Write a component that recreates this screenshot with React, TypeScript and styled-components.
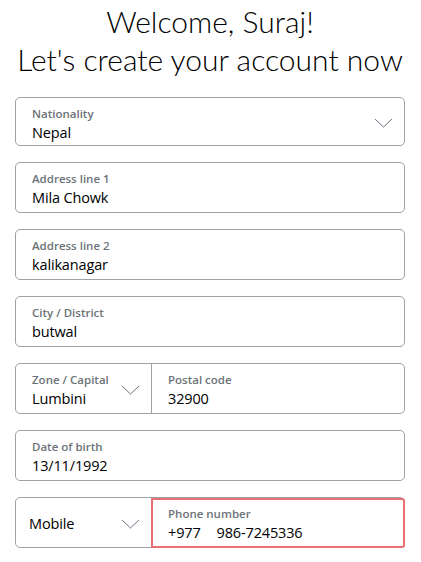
import React from "react";
import styled, { createGlobalStyle } from "styled-components";

const Global = createGlobalStyle`
  html, body { margin: 0; padding: 0; background: #fff; }
  body { font-family: "Open Sans", "Noto Sans", sans-serif; color: #000; }
`;

const Page = styled.div`
  width: 421px;
  padding: 0 16px 0 15px;
  box-sizing: border-box;
`;

const Title = styled.h1`
  margin: 2px 0 0;
  font-family: "Lato", "Open Sans", sans-serif;
  font-weight: 300;
  font-size: 30px;
  line-height: 38px;
  text-align: center;
  white-space: nowrap;
  color: #000;
`;

const Form = styled.div`
  margin-top: 19px;
  display: flex;
  flex-direction: column;
  gap: 16px;
`;

const Box = styled.div<{ $h?: number }>`
  height: ${(p) => p.$h ?? 51}px;
  box-sizing: border-box;
  border: 1px solid #9ca2a8;
  border-radius: 5px;
  display: flex;
  align-items: stretch;
`;

const Field = styled.div<{ $w?: number; $divider?: boolean; $error?: boolean }>`
  position: relative;
  flex: ${(p) => (p.$w ? `0 0 ${p.$w}px` : "1 1 auto")};
  box-sizing: border-box;
  padding: 7px 16px 0;
  display: flex;
  flex-direction: column;
  border-left: ${(p) => (p.$divider ? "1px solid #9ca2a8" : "none")};
  ${(p) =>
    p.$error &&
    `
    border: 2px solid #ea6f72;
    border-radius: 0 3px 3px 0;
    margin: 0 -1px -1px 0;
    padding: 5px 15px 0;
  `}
`;

const Label = styled.div`
  font-size: 11.5px;
  line-height: 17px;
  font-weight: 600;
  color: #6c7378;
`;

const Value = styled.div`
  font-size: 14.5px;
  line-height: 21px;
  color: #000;
  letter-spacing: -0.15px;
`;

const CenterValue = styled(Value)`
  display: flex;
  align-items: center;
  height: 100%;
  margin: -3px 0 0 -3px;
`;

const Chevron = styled.svg<{ $right: number }>`
  position: absolute;
  right: ${(p) => p.$right}px;
  top: 50%;
  margin-top: -4px;
  width: 19px;
  height: 10px;
`;

const Down = ({ right }: { right: number }) => (
  <Chevron $right={right} viewBox="0 0 19 10" fill="none">
    <path d="M1 1 L9.5 9 L18 1" stroke="#5d6070" strokeWidth="0.9" />
  </Chevron>
);

const Spacer = styled.span`
  display: inline-block;
  width: 16px;
`;

export default function App() {
  return (
    <Page>
      <Global />
      <Title>
        Welcome, Suraj!
        <br />
        Let's create your account now
      </Title>
      <Form>
        <Box $h={49}>
          <Field>
            <Label>Nationality</Label>
            <Value>Nepal</Value>
            <Down right={11} />
          </Field>
        </Box>
        <Box>
          <Field>
            <Label>Address line 1</Label>
            <Value>Mila Chowk</Value>
          </Field>
        </Box>
        <Box>
          <Field>
            <Label>Address line 2</Label>
            <Value>kalikanagar</Value>
          </Field>
        </Box>
        <Box>
          <Field>
            <Label>City / District</Label>
            <Value>butwal</Value>
          </Field>
        </Box>
        <Box>
          <Field $w={135}>
            <Label>Zone / Capital</Label>
            <Value>Lumbini</Value>
            <Down right={11} />
          </Field>
          <Field $divider>
            <Label>Postal code</Label>
            <Value>32900</Value>
          </Field>
        </Box>
        <Box>
          <Field>
            <Label>Date of birth</Label>
            <Value>13/11/1992</Value>
          </Field>
        </Box>
        <Box>
          <Field $w={135}>
            <CenterValue>Mobile</CenterValue>
            <Down right={11} />
          </Field>
          <Field $error>
            <Label>Phone number</Label>
            <Value>
              +977<Spacer />986-7245336
            </Value>
          </Field>
        </Box>
      </Form>
    </Page>
  );
}
